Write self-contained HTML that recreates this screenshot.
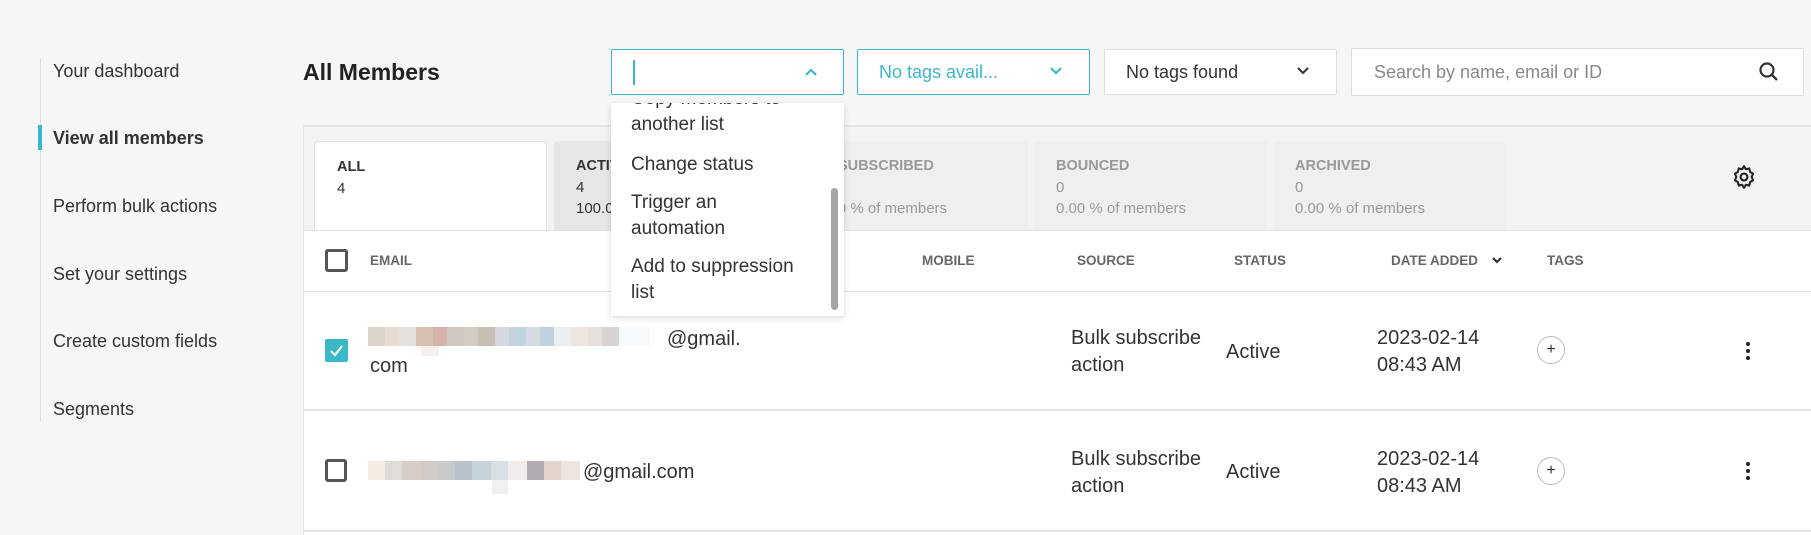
<!DOCTYPE html>
<html><head><meta charset="utf-8"><style>
*{margin:0;padding:0;box-sizing:border-box}
body{width:1811px;height:535px;background:#f6f6f6;font-family:"Liberation Sans",sans-serif;color:#333;position:relative;overflow:hidden}
.a{position:absolute;white-space:nowrap}
.nav{font-size:18px;color:#333;left:53px}
.box{position:absolute;height:46px;top:49px;background:#fff;border:1px solid #ddd;border-radius:2px}
.tab{position:absolute;top:141px;height:89px;width:233px;background:#efefef;border-radius:4px 4px 0 0}
.tab .t{position:absolute;left:22px;top:15px;font-size:14.5px;font-weight:bold;color:#999;line-height:21px}
.tab .t span{font-weight:normal;display:block;font-size:15px}
.hd{font-size:13.5px;font-weight:bold;color:#666;top:253px}
.cell{font-size:20px;color:#333;line-height:27px}
.pix{position:absolute;height:19px}
.plus{position:absolute;width:28px;height:28px;border:1px solid #bbb;border-radius:50%;font-size:16px;line-height:25px;text-align:center;color:#333}
.dots{position:absolute;width:4px}
.dots i{display:block;width:4px;height:4px;border-radius:50%;background:#222;margin-bottom:3px}
.m{font-size:19px;line-height:26px;color:#333}
</style></head><body>
<div class="a" style="left:40px;top:58px;width:1px;height:363px;background:#ddd"></div>
<div class="a" style="left:38px;top:125px;width:4px;height:25px;background:#3bb8c8"></div>
<div class="a nav" style="top:61px">Your dashboard</div>
<div class="a nav" style="top:128px;font-weight:bold">View all members</div>
<div class="a nav" style="top:196px">Perform bulk actions</div>
<div class="a nav" style="top:264px">Set your settings</div>
<div class="a nav" style="top:331px">Create custom fields</div>
<div class="a nav" style="top:399px">Segments</div>
<div class="a" style="left:303px;top:59px;font-size:23px;font-weight:bold;color:#222">All Members</div>

<div class="box" style="left:611px;width:233px;border-color:#3bb8c8"><div class="a" style="left:21px;top:10px;width:2px;height:25px;background:#3bb8c8"></div>
<svg class="a" style="left:192px;top:17px" width="14" height="10" viewBox="0 0 14 10"><path d="M2 8L7 3L12 8" stroke="#3bb8c8" stroke-width="2.2" fill="none"/></svg></div>
<div class="box" style="left:857px;width:233px;border-color:#3bb8c8"><div class="a" style="left:21px;top:12px;font-size:18px;color:#3bb8c8">No tags avail...</div>
<svg class="a" style="left:191px;top:16px" width="14" height="10" viewBox="0 0 14 10"><path d="M2 2L7 7L12 2" stroke="#3bb8c8" stroke-width="2.2" fill="none"/></svg></div>
<div class="box" style="left:1104px;width:233px"><div class="a" style="left:21px;top:12px;font-size:18px;color:#333">No tags found</div>
<svg class="a" style="left:191px;top:16px" width="14" height="10" viewBox="0 0 14 10"><path d="M2 2L7 7L12 2" stroke="#333" stroke-width="2" fill="none"/></svg></div>
<div class="box" style="left:1351px;width:453px;top:48px;height:48px"><div class="a" style="left:22px;top:13px;font-size:18px;color:#888">Search by name, email or ID</div>
<svg class="a" style="left:406px;top:12px" width="22" height="22" viewBox="0 0 22 22"><circle cx="9" cy="9" r="6.5" stroke="#333" stroke-width="2.2" fill="none"/><path d="M13.5 13.5L19 19" stroke="#333" stroke-width="2.4"/></svg></div>

<div class="a" style="left:303px;top:125px;width:1508px;height:410px;background:#f3f3f3;border-top:2px solid #e6e6e6;border-left:1px solid #e6e6e6"></div>
<div class="tab" style="left:314px;background:#fff;border:1px solid #e3e3e3;border-bottom:none"><div class="t" style="color:#333">ALL<span>4</span></div></div>
<div class="tab" style="left:554px;background:#e6e6e6"><div class="t" style="color:#333">ACTIVE<span>4</span><span>100.00 % of members</span></div></div>
<div class="tab" style="left:795px"><div class="t">UNSUBSCRIBED<span>0</span><span>0.00 % of members</span></div></div>
<div class="tab" style="left:1034px"><div class="t">BOUNCED<span>0</span><span>0.00 % of members</span></div></div>
<div class="tab" style="left:1273px"><div class="t">ARCHIVED<span>0</span><span>0.00 % of members</span></div></div>
<svg class="a" style="left:1731px;top:164px" width="26" height="26" viewBox="0 0 24 24"><circle cx="12" cy="12" r="3.2" stroke="#222" stroke-width="2" fill="none"/><path d="M12 2l1.7 2.8 3.2-.7.7 3.2 2.8 1.7-1.4 3 1.4 3-2.8 1.7-.7 3.2-3.2-.7L12 22l-1.7-2.8-3.2.7-.7-3.2-2.8-1.7 1.4-3-1.4-3 2.8-1.7.7-3.2 3.2.7z" stroke="#222" stroke-width="1.9" fill="none" stroke-linejoin="round"/></svg>

<div class="a" style="left:303px;top:230px;width:1508px;height:305px;background:#fff;border-top:1px solid #e3e3e3;border-left:1px solid #e6e6e6"></div>
<div class="a" style="left:303px;top:291px;width:1508px;height:1px;background:#e3e3e3"></div>
<div class="a" style="left:303px;top:409px;width:1508px;height:2px;background:#e3e3e3"></div>
<div class="a" style="left:303px;top:530px;width:1508px;height:2px;background:#e3e3e3"></div>
<div class="a" style="left:325px;top:249px;width:23px;height:23px;border:3px solid #555;border-radius:3px"></div>
<div class="a hd" style="left:370px">EMAIL</div>
<div class="a hd" style="left:922px">MOBILE</div>
<div class="a hd" style="left:1077px">SOURCE</div>
<div class="a hd" style="left:1234px">STATUS</div>
<div class="a hd" style="left:1391px">DATE ADDED</div>
<svg class="a" style="left:1491px;top:256px" width="12" height="9" viewBox="0 0 12 9"><path d="M2 2L6 6L10 2" stroke="#333" stroke-width="2.2" fill="none"/></svg>
<div class="a hd" style="left:1547px">TAGS</div>

<div class="a" style="left:325px;top:339px;width:23px;height:23px;background:#3bb8c8;border-radius:2px"></div>
<svg class="a" style="left:328px;top:342px" width="17" height="17" viewBox="0 0 17 17"><path d="M3 9l4 4 7-9" stroke="#fff" stroke-width="2.2" fill="none"/></svg>
<div class="pix" style="left:368px;top:327px;width:282px;background:linear-gradient(90deg,#dcd3cb 0 6%,#e8ddd0 6% 11%,#e4e2e0 11% 17%,#d6c0b4 17% 23%,#d4b4a8 23% 28%,#cfc8c2 28% 34%,#d4cbc1 34% 39%,#c8beb4 39% 45%,#d6d8df 45% 50%,#c4d4df 50% 56%,#d6dbe3 56% 61%,#bfd0df 61% 66%,#e8efee 66% 72%,#ece6df 72% 78%,#e6dfdb 78% 83%,#d5d3d4 83% 89%,#f7fafd 89% 100%)"></div>
<div class="pix" style="left:421px;top:346px;width:18px;height:10px;background:#f5f0ee"></div>
<div class="a cell" style="left:667px;top:326px">@gmail.</div>
<div class="a cell" style="left:370px;top:353px">com</div>
<div class="a cell" style="left:1071px;top:325px">Bulk subscribe<br>action</div>
<div class="a cell" style="left:1226px;top:339px">Active</div>
<div class="a cell" style="left:1377px;top:325px">2023-02-14<br>08:43 AM</div>
<div class="plus" style="left:1537px;top:336px">+</div>
<div class="dots" style="left:1746px;top:342px"><i></i><i></i><i></i></div>

<div class="a" style="left:325px;top:459px;width:22px;height:23px;border:3px solid #555;border-radius:3px"></div>
<div class="pix" style="left:368px;top:461px;width:212px;background:linear-gradient(90deg,#f5ece4 0 8%,#dedcd8 8% 16%,#d8ccc8 16% 25%,#d2cac8 25% 33%,#cacaca 33% 41%,#b8c2cc 41% 49%,#c4d4da 49% 58%,#d8e0e6 58% 66%,#f0ecea 66% 75%,#b0acb2 75% 83%,#e0d4cc 83% 91%,#ece4de 91% 100%)"></div>
<div class="pix" style="left:492px;top:480px;width:16px;height:14px;background:#f0f0f0"></div>
<div class="a cell" style="left:583px;top:459px">@gmail.com</div>
<div class="a cell" style="left:1071px;top:446px">Bulk subscribe<br>action</div>
<div class="a cell" style="left:1226px;top:459px">Active</div>
<div class="a cell" style="left:1377px;top:446px">2023-02-14<br>08:43 AM</div>
<div class="plus" style="left:1537px;top:457px">+</div>
<div class="dots" style="left:1746px;top:462px"><i></i><i></i><i></i></div>

<div class="a" style="left:611px;top:103px;width:233px;height:213px;background:#fff;box-shadow:0 2px 6px rgba(0,0,0,.15);overflow:hidden">
<div class="a m" style="left:20px;top:-17px">Copy members to<br>another list</div>
<div class="a m" style="left:20px;top:49px">Change status</div>
<div class="a m" style="left:20px;top:87px">Trigger an<br>automation</div>
<div class="a m" style="left:20px;top:151px">Add to suppression<br>list</div>
<div class="a" style="left:220px;top:85px;width:7px;height:122px;background:#a5a5a5;border-radius:4px"></div>
</div>
</body></html>
